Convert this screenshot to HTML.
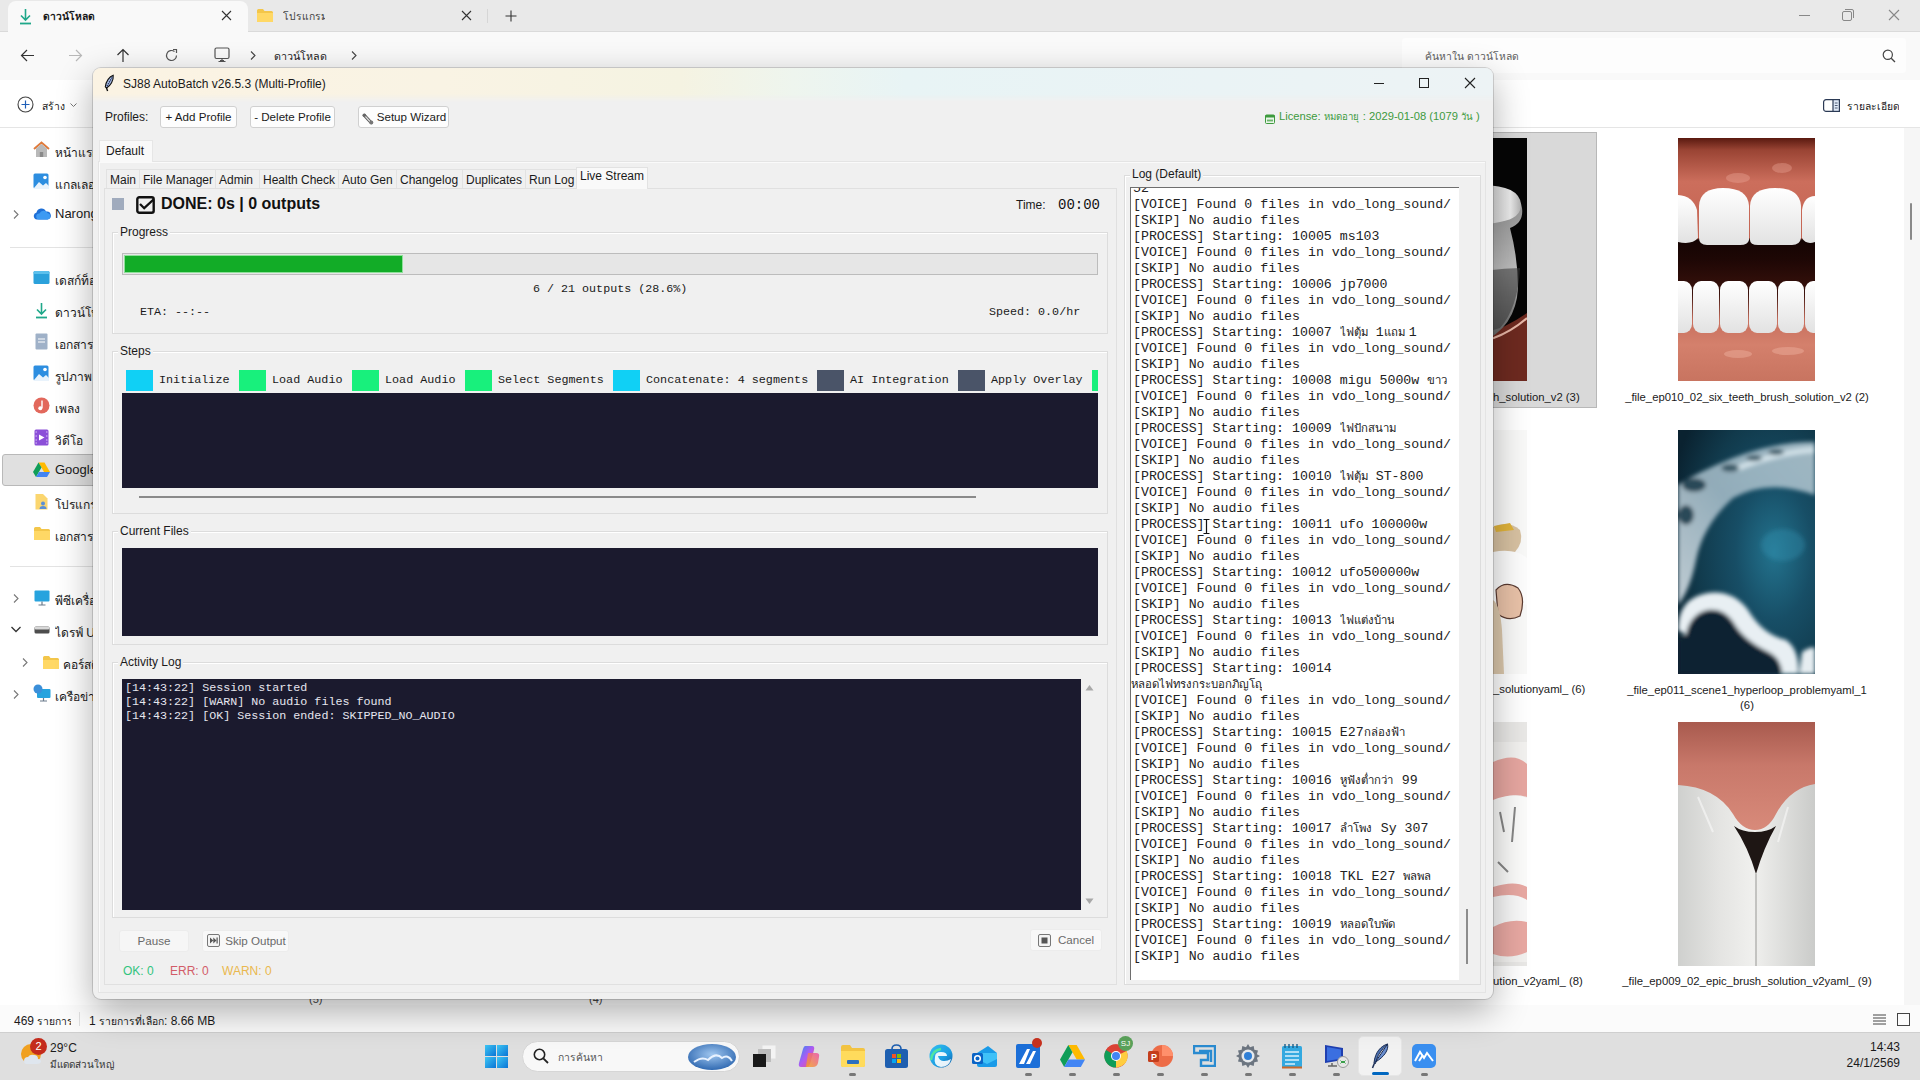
<!DOCTYPE html>
<html><head><meta charset="utf-8">
<style>
*{margin:0;padding:0;box-sizing:border-box}
html,body{width:1920px;height:1080px;overflow:hidden;font-family:"Liberation Sans",sans-serif;background:#fff;color:#1a1a1a}
.a{position:absolute}
.th{font-size:12px;white-space:nowrap}
.sb{position:absolute;left:55px;width:40px;overflow-x:clip;font-size:12px;color:#1a1a1a;white-space:nowrap}
.ic{position:absolute}
.lab{position:absolute;font-size:11.3px;color:#1a1a1a;white-space:nowrap;text-align:center}
.t{display:inline-block;overflow-x:clip;white-space:nowrap;vertical-align:baseline;font-size:0.86em}
.mono{font-family:"Liberation Mono",monospace}
/* app */
.win{position:absolute;left:93px;top:68px;width:1400px;height:931px;background:#f0f0f0;border-radius:8px;box-shadow:0 12px 36px rgba(0,0,0,.32),0 0 0 1px rgba(0,0,0,.14);overflow:hidden}
.btn{position:absolute;height:22px;background:#fdfdfd;border:1px solid #d0d0d0;border-radius:3px;font-size:11.6px;line-height:20px;padding:0;text-align:center;white-space:nowrap;color:#1a1a1a}
.tab{position:absolute;top:101px;height:19px;border:1px solid #e2e2e2;border-bottom:none;font-size:12px;line-height:20px;padding-left:3px;white-space:nowrap;color:#1a1a1a;background:#f0f0f0}
.lf{position:absolute;border:1px solid #dcdcdc;box-shadow:inset 1px 1px 0 #fff}
.lft{position:absolute;font-size:12px;background:#f0f0f0;padding:0 2px;color:#1a1a1a;white-space:nowrap}
.dark{position:absolute;background:#1b1a2e}
.step{position:absolute;top:302px;width:27px;height:21px}
.stt{position:absolute;top:303px;font-family:"Liberation Mono",monospace;font-size:11.75px;line-height:19px;color:#1a1a1a;white-space:nowrap}
.log{position:absolute;left:1134px;font-family:"Liberation Mono",monospace;font-size:13.25px;line-height:16px;color:#222;white-space:pre}
</style></head><body>

<!-- ============ EXPLORER BACKGROUND ============ -->
<div class="a" style="left:0;top:0;width:1920px;height:32px;background:#e9e9e9"></div>
<div class="a" style="left:8px;top:1px;width:240px;height:31px;background:#f9f9f9;border-radius:8px 8px 0 0"></div>
<div class="a" style="left:0;top:32px;width:1920px;height:48px;background:#f9f9f9"></div>
<div class="a" style="left:248px;top:31px;width:1672px;height:1px;background:#dadada"></div>
<div class="a" style="left:0;top:31px;width:8px;height:1px;background:#dadada"></div>
<div class="a" style="left:0;top:80px;width:1920px;height:47px;background:#ffffff"></div>
<div class="a" style="left:0;top:127px;width:1920px;height:1px;background:#e5e5e5"></div>
<div class="a" style="left:0;top:128px;width:1920px;height:877px;background:#ffffff"></div>
<div class="a" style="left:0;top:1005px;width:1920px;height:27px;background:#fbfbfb"></div>
<div class="a" style="left:0;top:1032px;width:1920px;height:48px;background:#dfdfdf;border-top:1px solid #cfcfcf"></div>


<!-- explorer tabs -->
<svg class="a" style="left:19px;top:8px" width="13" height="17" viewBox="0 0 13 17"><path d="M6.5 1V12M2 7.5L6.5 12L11 7.5" fill="none" stroke="#1fa88a" stroke-width="1.6"/><path d="M1 15.5H12" stroke="#1fa88a" stroke-width="1.8"/></svg>
<div class="a th" style="left:43px;top:8px;font-weight:bold;font-size:12px;color:#1a1a1a"><span class="t" style="width:53px">ดาวน์โหลด</span></div>
<svg class="a" style="left:221px;top:10px" width="11" height="11" viewBox="0 0 11 11"><path d="M1 1L10 10M10 1L1 10" stroke="#333" stroke-width="1.1"/></svg>
<svg class="a" style="left:256px;top:8px" width="18" height="15" viewBox="0 0 18 15"><path d="M1 2.5Q1 1 2.5 1H7L8.5 3H15.5Q17 3 17 4.5V13Q17 14 16 14H2Q1 14 1 13Z" fill="#f3c64a"/><path d="M1 5H17V13Q17 14 16 14H2Q1 14 1 13Z" fill="#ffd865"/></svg>
<div class="a th" style="left:283px;top:8px;color:#444"><span class="t" style="width:42px">โปรแกรม</span></div>
<svg class="a" style="left:461px;top:10px" width="11" height="11" viewBox="0 0 11 11"><path d="M1 1L10 10M10 1L1 10" stroke="#333" stroke-width="1.1"/></svg>
<div class="a" style="left:487px;top:9px;width:1px;height:14px;background:#d6d6d6"></div>
<svg class="a" style="left:505px;top:10px" width="12" height="12" viewBox="0 0 12 12"><path d="M6 0.5V11.5M0.5 6H11.5" stroke="#333" stroke-width="1.1"/></svg>
<div class="a" style="left:1799px;top:15px;width:11px;height:1px;background:#888"></div>
<svg class="a" style="left:1842px;top:9px" width="12" height="12" viewBox="0 0 12 12"><rect x="0.5" y="2.5" width="9" height="9" rx="1.5" fill="none" stroke="#888"/><path d="M3 0.5H10Q11.5 0.5 11.5 2V9" fill="none" stroke="#888"/></svg>
<svg class="a" style="left:1888px;top:9px" width="12" height="12" viewBox="0 0 12 12"><path d="M1 1L11 11M11 1L1 11" stroke="#888" stroke-width="1.1"/></svg>

<!-- nav row -->
<svg class="a" style="left:20px;top:49px" width="15" height="13" viewBox="0 0 15 13"><path d="M14 6.5H1.5M7 1L1.5 6.5L7 12" fill="none" stroke="#333" stroke-width="1.2"/></svg>
<svg class="a" style="left:68px;top:49px" width="15" height="13" viewBox="0 0 15 13"><path d="M1 6.5H13.5M8 1L13.5 6.5L8 12" fill="none" stroke="#b8b8b8" stroke-width="1.2"/></svg>
<svg class="a" style="left:116px;top:48px" width="14" height="15" viewBox="0 0 14 15"><path d="M7 14V1.5M1.5 7L7 1.5L12.5 7" fill="none" stroke="#333" stroke-width="1.2"/></svg>
<svg class="a" style="left:164px;top:48px" width="15" height="15" viewBox="0 0 15 15"><path d="M12.5 7.5A5 5 0 1 1 10.5 3.5" fill="none" stroke="#555" stroke-width="1.2"/><path d="M9 1.5H12.5V5" fill="none" stroke="#555" stroke-width="1.2"/></svg>
<svg class="a" style="left:214px;top:47px" width="16" height="16" viewBox="0 0 16 16"><rect x="1" y="1" width="14" height="10.5" rx="1.5" fill="none" stroke="#555" stroke-width="1.2"/><path d="M6 13.5H10M8 11.5V13.5M4.5 14.5H11.5" stroke="#555" stroke-width="1.2"/></svg>
<svg class="a" style="left:250px;top:51px" width="6" height="9" viewBox="0 0 6 9"><path d="M1 0.5L5 4.5L1 8.5" fill="none" stroke="#444" stroke-width="1.1"/></svg>
<div class="a th" style="left:274px;top:48px;font-size:12.5px;color:#1a1a1a"><span class="t" style="width:58px">ดาวน์โหลด</span></div>
<svg class="a" style="left:351px;top:51px" width="6" height="9" viewBox="0 0 6 9"><path d="M1 0.5L5 4.5L1 8.5" fill="none" stroke="#444" stroke-width="1.1"/></svg>
<div class="a" style="left:1402px;top:38px;width:504px;height:35px;background:#fdfdfd;border-radius:4px"></div>
<div class="a th" style="left:1425px;top:48px;color:#5e5e5e"><span class="t" style="width:108px">ค้นหาใน ดาวน์โหลด</span></div>
<svg class="a" style="left:1882px;top:49px" width="14" height="14" viewBox="0 0 14 14"><circle cx="5.8" cy="5.8" r="4.6" fill="none" stroke="#444" stroke-width="1.2"/><path d="M9.2 9.2L13 13" stroke="#444" stroke-width="1.3"/></svg>

<!-- command bar -->
<svg class="a" style="left:17px;top:96px" width="17" height="17" viewBox="0 0 17 17"><circle cx="8.5" cy="8.5" r="7.5" fill="none" stroke="#444" stroke-width="1.1"/><path d="M8.5 4.5V12.5M4.5 8.5H12.5" stroke="#1f5fb8" stroke-width="1.2"/></svg>
<div class="a th" style="left:42px;top:98px;color:#1a1a1a"><span class="t" style="width:23px">สร้าง</span></div>
<svg class="a" style="left:70px;top:103px" width="7" height="5" viewBox="0 0 7 5"><path d="M0.5 0.5L3.5 3.5L6.5 0.5" fill="none" stroke="#777"/></svg>
<svg class="a" style="left:1823px;top:99px" width="17" height="13" viewBox="0 0 17 13"><rect x="0.6" y="0.6" width="15.8" height="11.8" rx="2.5" fill="none" stroke="#2b3a55" stroke-width="1.2"/><rect x="10" y="0.6" width="6.4" height="11.8" fill="#dfe9f7" stroke="#2b3a55" stroke-width="1.2"/><path d="M11.8 4H14.6M11.8 6.5H14.6M11.8 9H14.6" stroke="#2b3a55" stroke-width="0.8"/></svg>
<div class="a th" style="left:1847px;top:98px;color:#1a1a1a"><span class="t" style="width:52px">รายละเอียด</span></div>

<!-- sidebar -->
<svg class="a" style="left:33px;top:141px" width="17" height="17" viewBox="0 0 17 17"><path d="M1 8L8.5 1.5L16 8" fill="none" stroke="#e07a3a" stroke-width="2"/><path d="M3 7.5V16H14V7.5L8.5 3Z" fill="#b9b9b9"/><rect x="6.8" y="11" width="3.4" height="5" fill="#8a8a8a"/></svg>
<div class="sb" style="top:143px">หน้าแรก</div>
<svg class="a" style="left:33px;top:173px" width="17" height="17" viewBox="0 0 17 17"><rect x="0.5" y="0.5" width="15" height="15" rx="1.5" fill="#2d8ee0"/><path d="M1 15L6 9L10 12.5L13 10L16 13V16H1Z" fill="#e9f3fc"/><circle cx="12" cy="4.5" r="1.8" fill="#fff"/></svg>
<div class="sb" style="top:175px">แกลเลอรี</div>
<svg class="a" style="left:13px;top:210px" width="6" height="9" viewBox="0 0 6 9"><path d="M1 0.5L5 4.5L1 8.5" fill="none" stroke="#777" stroke-width="1.1"/></svg>
<svg class="a" style="left:33px;top:207px" width="18" height="13" viewBox="0 0 18 13"><path d="M4 12.5A3.5 3.5 0 0 1 3.5 5.6A5 5 0 0 1 13 4.5A4 4 0 0 1 14.5 12.5Z" fill="#1e6fd6"/><path d="M6 12.5A3 3 0 0 1 6.5 6.5A4.5 4.5 0 0 1 14.5 6A3.3 3.3 0 0 1 14.5 12.5Z" fill="#3d9af3"/></svg>
<div class="sb" style="top:206px;font-size:13px">Narong</div>
<div class="a" style="left:10px;top:247px;width:83px;height:1px;background:#e3e3e3"></div>
<svg class="a" style="left:33px;top:270px" width="17" height="15" viewBox="0 0 17 15"><rect x="0.5" y="1" width="16" height="13" rx="1.5" fill="#2ba1db"/><rect x="0.5" y="1" width="16" height="3" rx="1.5" fill="#5cc0ec"/></svg>
<div class="sb" style="top:271px">เดสก์ท็อป</div>
<svg class="a" style="left:35px;top:302px" width="13" height="17" viewBox="0 0 13 17"><path d="M6.5 1V12M2 7.5L6.5 12L11 7.5" fill="none" stroke="#1fa88a" stroke-width="1.6"/><path d="M1 15.5H12" stroke="#1fa88a" stroke-width="1.8"/></svg>
<div class="sb" style="top:303px">ดาวน์โหลด</div>
<svg class="a" style="left:35px;top:333px" width="13" height="17" viewBox="0 0 13 17"><rect x="0.5" y="0.5" width="12" height="16" rx="1" fill="#9fb1c8"/><path d="M3 6H10M3 9H10" stroke="#fff" stroke-width="1"/></svg>
<div class="sb" style="top:335px">เอกสาร</div>
<svg class="a" style="left:33px;top:365px" width="17" height="17" viewBox="0 0 17 17"><rect x="0.5" y="0.5" width="15" height="15" rx="1.5" fill="#2d8ee0"/><path d="M1 15L6 9L10 12.5L13 10L16 13V16H1Z" fill="#e9f3fc"/><circle cx="12" cy="4.5" r="1.8" fill="#fff"/></svg>
<div class="sb" style="top:367px">รูปภาพ</div>
<svg class="a" style="left:33px;top:397px" width="17" height="17" viewBox="0 0 17 17"><circle cx="8.5" cy="8.5" r="8" fill="#e2685c"/><path d="M9 3.5V11" stroke="#fff" stroke-width="1.4"/><circle cx="7.3" cy="11.3" r="2" fill="#fff"/></svg>
<div class="sb" style="top:399px">เพลง</div>
<svg class="a" style="left:34px;top:429px" width="15" height="17" viewBox="0 0 15 17"><rect x="0.5" y="0.5" width="14" height="16" rx="1.5" fill="#8b4fd8"/><path d="M5 5.5L10.5 8.5L5 11.5Z" fill="#fff"/><path d="M1.5 3H3M1.5 7H3M1.5 11H3M1.5 14H3M12 3H13.5M12 7H13.5M12 11H13.5M12 14H13.5" stroke="#d7c3f5"/></svg>
<div class="sb" style="top:431px">วิดีโอ</div>
<div class="a" style="left:2px;top:454px;width:100px;height:32px;background:#e0e0e0;border:1px solid #b9b9b9;border-radius:3px"></div>
<svg class="a" style="left:33px;top:462px" width="17" height="15" viewBox="0 0 17 15"><path d="M5.5 0.5H11.5L17 10H11Z" fill="#ffba00"/><path d="M5.5 0.5L0 10L3 15L8.5 5.5Z" fill="#0f9d58"/><path d="M3 15H14L17 10H6Z" fill="#4285f4"/></svg>
<div class="sb" style="top:462px;font-size:13px">Google Drive</div>
<svg class="a" style="left:35px;top:493px" width="13" height="17" viewBox="0 0 13 17"><path d="M0.5 1H8L12.5 5.5V16.5H0.5Z" fill="#fbd66f"/><circle cx="8" cy="10.5" r="2" fill="#5b8fd6"/><path d="M4.5 16A3.5 3 0 0 1 11.5 16Z" fill="#5b8fd6"/></svg>
<div class="sb" style="top:495px">โปรแกรม</div>
<svg class="a" style="left:33px;top:526px" width="18" height="15" viewBox="0 0 18 15"><path d="M1 2.5Q1 1 2.5 1H7L8.5 3H15.5Q17 3 17 4.5V13Q17 14 16 14H2Q1 14 1 13Z" fill="#f3c64a"/><path d="M1 5H17V13Q17 14 16 14H2Q1 14 1 13Z" fill="#ffd865"/></svg>
<div class="sb" style="top:527px">เอกสาร</div>
<div class="a" style="left:10px;top:566px;width:83px;height:1px;background:#e3e3e3"></div>
<svg class="a" style="left:13px;top:594px" width="6" height="9" viewBox="0 0 6 9"><path d="M1 0.5L5 4.5L1 8.5" fill="none" stroke="#777" stroke-width="1.1"/></svg>
<svg class="a" style="left:34px;top:590px" width="16" height="16" viewBox="0 0 16 16"><rect x="0.5" y="0.5" width="15" height="11" rx="1" fill="#27a3de"/><path d="M8 11.5V14.5M4.5 15H11.5" stroke="#6b7b8b" stroke-width="1.2"/></svg>
<div class="sb" style="top:591px">พีซีเครื่องนี้</div>
<svg class="a" style="left:11px;top:626px" width="10" height="7" viewBox="0 0 10 7"><path d="M0.5 1L5 5.5L9.5 1" fill="none" stroke="#333" stroke-width="1.3"/></svg>
<svg class="a" style="left:34px;top:626px" width="16" height="8" viewBox="0 0 16 8"><rect x="0.5" y="0.5" width="15" height="7" rx="1.5" fill="#4d4d4d"/><rect x="0.5" y="0.5" width="15" height="3" rx="1.5" fill="#d8d8d8"/></svg>
<div class="sb" style="top:623px">ไดรฟ์ USB</div>
<svg class="a" style="left:22px;top:658px" width="6" height="9" viewBox="0 0 6 9"><path d="M1 0.5L5 4.5L1 8.5" fill="none" stroke="#777" stroke-width="1.1"/></svg>
<svg class="a" style="left:42px;top:655px" width="18" height="15" viewBox="0 0 18 15"><path d="M1 2.5Q1 1 2.5 1H7L8.5 3H15.5Q17 3 17 4.5V13Q17 14 16 14H2Q1 14 1 13Z" fill="#f3c64a"/><path d="M1 5H17V13Q17 14 16 14H2Q1 14 1 13Z" fill="#ffd865"/></svg>
<div class="sb" style="top:655px;left:63px">คอร์สติดตั้ง</div>
<svg class="a" style="left:13px;top:690px" width="6" height="9" viewBox="0 0 6 9"><path d="M1 0.5L5 4.5L1 8.5" fill="none" stroke="#777" stroke-width="1.1"/></svg>
<svg class="a" style="left:33px;top:684px" width="18" height="18" viewBox="0 0 18 18"><rect x="4" y="5" width="13.5" height="9" rx="1" fill="#27a3de"/><circle cx="5" cy="5" r="4.5" fill="#3b8fd9"/><path d="M10.5 14V16.5M7 17H14" stroke="#6b7b8b" stroke-width="1.2"/></svg>
<div class="sb" style="top:687px">เครือข่าย</div>


<!-- content thumbnails -->
<div class="a" style="left:1904px;top:128px;width:16px;height:877px;background:#f6f6f6"></div>
<div class="a" style="left:1910px;top:203px;width:2px;height:37px;background:#8a8a8a;border-radius:1px"></div>
<div class="a" style="left:1380px;top:132px;width:217px;height:276px;background:#d9d9d9;border:1px solid #b8b8b8"></div>
<svg class="a" style="left:1390px;top:138px" width="137" height="243" viewBox="0 0 137 243">
<defs><linearGradient id="g1" x1="0" y1="0" x2="1" y2="0"><stop offset="0.6" stop-color="#d8d8d8"/><stop offset="0.85" stop-color="#eeeeee"/><stop offset="1" stop-color="#b0b0b0"/></linearGradient>
<linearGradient id="g1b" x1="0" y1="0" x2="0" y2="1"><stop offset="0" stop-color="#8a8a8a"/><stop offset="0.5" stop-color="#bdbdbd"/><stop offset="1" stop-color="#5a5a5a"/></linearGradient></defs>
<rect width="137" height="243" fill="#060606"/>
<path d="M0 200Q80 215 137 175V243H0Z" fill="#6e2a20"/>
<path d="M60 55Q130 45 132 70Q134 85 120 90Q128 120 128 150Q126 190 90 205Q60 210 40 200V60Z" fill="url(#g1b)"/>
<path d="M60 50Q128 40 131 66Q132 80 110 84Q80 90 60 85Z" fill="url(#g1)"/>
<path d="M60 140Q100 130 130 130Q128 170 110 190Q80 200 60 195Z" fill="#3a3a3a" opacity="0.55"/>
<path d="M50 205Q100 212 137 180" fill="none" stroke="#e8b8a8" stroke-width="2.2"/>
</svg>
<div class="lab" style="left:1493px;top:391px;width:100px;text-align:left">h_solution_v2 (3)</div>

<svg class="a" style="left:1678px;top:138px" width="137" height="243" viewBox="0 0 137 243">
<defs><linearGradient id="gm" x1="0" y1="0" x2="0" y2="1"><stop offset="0" stop-color="#5a1a10"/><stop offset="0.05" stop-color="#9a4434"/><stop offset="0.18" stop-color="#cc6e5c"/><stop offset="0.41" stop-color="#c46452"/><stop offset="0.42" stop-color="#140403"/><stop offset="0.5" stop-color="#1e0705"/><stop offset="0.64" stop-color="#3a120c"/><stop offset="0.75" stop-color="#c8705e"/><stop offset="0.85" stop-color="#d4806c"/><stop offset="1" stop-color="#c87460"/></linearGradient>
<linearGradient id="tw" x1="0" y1="0" x2="0" y2="1"><stop offset="0" stop-color="#ffffff"/><stop offset="1" stop-color="#e2e2e2"/></linearGradient></defs>
<rect width="137" height="243" fill="url(#gm)"/>
<ellipse cx="60" cy="40" rx="12" ry="5" fill="#f0b0a0" opacity="0.35"/><ellipse cx="104" cy="30" rx="10" ry="5" fill="#f0b0a0" opacity="0.35"/>
<path d="M0 57Q15 58 19 72L20 100Q14 107 0 104Z" fill="url(#tw)"/>
<path d="M137 58Q126 58 124 72L124 100Q128 107 137 104Z" fill="url(#tw)"/>
<path d="M21 68Q22 50 45 50Q70 50 71 68L71 102Q70 107 62 107H29Q21 107 21 100Z" fill="url(#tw)"/>
<path d="M72 68Q73 50 97 50Q122 50 123 68L123 100Q122 107 114 107H80Q72 107 72 102Z" fill="url(#tw)"/>
<rect x="-8" y="143" width="22" height="52" rx="8" ry="9" fill="url(#tw)"/><rect x="15" y="143" width="26" height="52" rx="8" ry="9" fill="url(#tw)"/><rect x="42" y="143" width="28" height="52" rx="8" ry="9" fill="url(#tw)"/><rect x="71" y="143" width="28" height="52" rx="8" ry="9" fill="url(#tw)"/><rect x="100" y="143" width="26" height="52" rx="8" ry="9" fill="url(#tw)"/><rect x="127" y="143" width="23" height="52" rx="8" ry="9" fill="url(#tw)"/>
<ellipse cx="60" cy="216" rx="14" ry="4" fill="#f2b8a8" opacity="0.4"/><ellipse cx="110" cy="213" rx="16" ry="4" fill="#f2b8a8" opacity="0.4"/>
</svg>
<div class="lab" style="left:1620px;top:391px;width:254px">_file_ep010_02_six_teeth_brush_solution_v2 (2)</div>

<svg class="a" style="left:1390px;top:430px" width="137" height="244" viewBox="0 0 137 244">
<rect width="137" height="244" fill="#f9f9f8"/>
<path d="M103 97Q118 90 130 100Q134 112 125 122L103 122Z" fill="#d8c2a2"/>
<path d="M104 96L120 93L124 100L106 102Z" fill="#e2b43a"/>
<path d="M103 122Q125 118 137 128V175Q122 170 103 172Z" fill="#fdfdfd"/>
<path d="M106 160Q115 150 128 158Q136 168 130 186Q118 192 108 184Z" fill="#e9c2a8" stroke="#5a3a30" stroke-width="1.2"/>
<path d="M103 170Q110 175 112 200L114 244H103Z" fill="#dcc8ac"/>
</svg>
<div class="lab" style="left:1493px;top:683px;width:100px;text-align:left">_solutionyaml_ (6)</div>

<svg class="a" style="left:1678px;top:430px" width="137" height="244" viewBox="0 0 137 244">
<defs><radialGradient id="gb" cx="0.7" cy="0.5" r="0.8"><stop offset="0" stop-color="#23738e"/><stop offset="0.35" stop-color="#174e66"/><stop offset="0.7" stop-color="#113a4c"/><stop offset="1" stop-color="#0a2230"/></radialGradient>
<linearGradient id="gw" x1="1" y1="0" x2="0" y2="1"><stop offset="0" stop-color="#b8ccd6"/><stop offset="0.5" stop-color="#a8bfcb"/><stop offset="1" stop-color="#dfe8ee"/></linearGradient>
<filter id="bl" x="-10%" y="-10%" width="120%" height="120%"><feGaussianBlur stdDeviation="2"/></filter>
<clipPath id="cb"><rect width="137" height="244"/></clipPath></defs>
<rect width="137" height="244" fill="url(#gb)"/>
<g clip-path="url(#cb)" filter="url(#bl)">
<ellipse cx="105" cy="115" rx="22" ry="16" fill="#3aa0c0" opacity="0.3"/>
<path d="M137 12Q95 12 55 28Q20 42 0 55V175Q12 160 18 130Q25 95 55 68Q90 48 137 65Z" fill="url(#gw)" opacity="0.85"/>
<path d="M137 20Q100 22 60 38" stroke="#cfdfe6" stroke-width="6" fill="none"/>
<ellipse cx="98" cy="22" rx="8" ry="3" fill="#3a5a68"/><ellipse cx="76" cy="28" rx="8" ry="3" fill="#3a5a68"/><ellipse cx="52" cy="38" rx="9" ry="4" fill="#3a5a68"/>
<ellipse cx="16" cy="55" rx="12" ry="7" fill="#2a4a58"/><ellipse cx="8" cy="85" rx="8" ry="10" fill="#2a4a58"/>
<path d="M0 200Q0 168 30 163Q55 160 70 180Q85 205 108 210Q122 220 120 244H104Q103 228 90 222Q65 210 55 192Q45 178 30 180Q12 184 8 205Z" fill="#e8eff3"/>
<path d="M8 205Q12 184 30 180Q45 178 55 192Q65 210 90 222Q103 228 104 244H0V210Z" fill="#0e2430"/>
<path d="M124 222Q133 216 137 218V244H121Z" fill="#e6edf1"/>
</g>
</svg>
<div class="lab" style="left:1620px;top:683px;width:254px;line-height:15px">_file_ep011_scene1_hyperloop_problemyaml_1<br>(6)</div>

<svg class="a" style="left:1390px;top:722px" width="137" height="244" viewBox="0 0 137 244">
<rect width="137" height="244" fill="#e9e8e6"/>
<path d="M103 20H137V240H103Z" fill="#f2f1ef"/>
<path d="M103 40Q125 30 137 42V75Q120 70 103 80Z" fill="#e6a6a0"/>
<path d="M103 78Q122 70 137 76V165Q120 160 103 168Z" fill="#fbfbfa"/>
<path d="M110 90L114 110M125 85L122 120M108 140L118 150" stroke="#3a3a3a" stroke-width="2" opacity="0.6"/>
<path d="M103 165Q125 158 137 165V230Q120 238 103 232Z" fill="#e8a8a2"/>
<path d="M103 175Q125 170 137 178V200Q120 196 103 205Z" fill="#f8f8f8"/>
</svg>
<div class="lab" style="left:1493px;top:975px;width:100px;text-align:left">ution_v2yaml_ (8)</div>

<svg class="a" style="left:1678px;top:722px" width="137" height="244" viewBox="0 0 137 244">
<defs><linearGradient id="gp" x1="0" y1="0" x2="0" y2="1"><stop offset="0" stop-color="#a85a4e"/><stop offset="0.4" stop-color="#c8786a"/><stop offset="1" stop-color="#d88a7a"/></linearGradient>
<linearGradient id="gt" x1="0" y1="0" x2="1" y2="0"><stop offset="0" stop-color="#cfd0ce"/><stop offset="0.3" stop-color="#e4e4e2"/><stop offset="0.55" stop-color="#f0f0ee"/><stop offset="1" stop-color="#cacbc9"/></linearGradient></defs>
<rect width="137" height="244" fill="url(#gt)"/>
<path d="M0 0H137V62Q112 66 98 92Q90 108 77 108Q64 108 55 92Q38 65 0 63Z" fill="url(#gp)"/>
<path d="M56 104Q64 110 77 110Q90 110 98 104Q86 125 78 152Q70 125 56 104Z" fill="#1e1614"/>
<path d="M78 152V244" stroke="#b4b4b2" stroke-width="1.5"/>
<path d="M20 75L35 110M110 85L100 120" stroke="#fff" stroke-width="2" opacity="0.5"/>
</svg>
<div class="lab" style="left:1620px;top:975px;width:254px">_file_ep009_02_epic_brush_solution_v2yaml_ (9)</div>

<!-- status bar -->
<div class="a th" style="left:14px;top:1013px;color:#1a1a1a">469 <span class="t" style="width:34px">รายการ</span></div>
<div class="a" style="left:79px;top:1012px;width:1px;height:14px;background:#e0e0e0"></div>
<div class="a th" style="left:89px;top:1013px;color:#1a1a1a">1 <span class="t" style="width:65px">รายการที่เลือก</span>: 8.66 MB</div>
<div class="a" style="left:309px;top:993px;font-size:11px;color:#444">(5)</div>
<div class="a" style="left:589px;top:993px;font-size:11px;color:#444">(4)</div>
<svg class="a" style="left:1873px;top:1014px" width="13" height="11" viewBox="0 0 13 11"><path d="M0 1H13M0 4H13M0 7H13M0 10H13" stroke="#444" stroke-width="1"/></svg>
<svg class="a" style="left:1897px;top:1013px" width="13" height="13" viewBox="0 0 13 13"><rect x="0.5" y="0.5" width="12" height="12" fill="none" stroke="#444"/></svg>


<!-- taskbar -->
<svg class="a" style="left:20px;top:1038px" width="26" height="28" viewBox="0 0 26 28"><circle cx="11" cy="16" r="10" fill="#f0a020"/><path d="M4 23Q4 19 8 19Q10 16 14 17Q18 17 18 21Q21 21 21 24Q20 26 17 26H7Q4 26 4 23Z" fill="#dfe6ee"/></svg>
<div class="a" style="left:30px;top:1038px;width:17px;height:17px;border-radius:50%;background:#c42b1c;color:#fff;font-size:11px;line-height:17px;text-align:center">2</div>
<div class="a th" style="left:50px;top:1041px;color:#1a1a1a;font-size:12px">29°C</div>
<div class="a th" style="left:50px;top:1057px;color:#333;font-size:11.5px"><span class="t" style="width:66px">มีแดดส่วนใหญ่</span></div>

<svg class="a" style="left:485px;top:1045px" width="23" height="23" viewBox="0 0 23 23"><defs><linearGradient id="wl" x1="0" y1="0" x2="1" y2="1"><stop offset="0" stop-color="#3ec7f4"/><stop offset="1" stop-color="#0a74d6"/></linearGradient></defs><rect x="0" y="0" width="11" height="11" fill="url(#wl)"/><rect x="12" y="0" width="11" height="11" fill="url(#wl)"/><rect x="0" y="12" width="11" height="11" fill="url(#wl)"/><rect x="12" y="12" width="11" height="11" fill="url(#wl)"/></svg>
<div class="a" style="left:522px;top:1041px;width:218px;height:31px;border-radius:16px;background:#f8f8f8;border:1px solid #d6d6d6"></div>
<svg class="a" style="left:533px;top:1048px" width="16" height="16" viewBox="0 0 16 16"><circle cx="6.5" cy="6.5" r="5.2" fill="none" stroke="#222" stroke-width="1.6"/><path d="M10.3 10.3L15 15" stroke="#222" stroke-width="1.8"/></svg>
<div class="a th" style="left:558px;top:1049px;color:#555;font-size:12px"><span class="t" style="width:52px">การค้นหา</span></div>
<svg class="a" style="left:688px;top:1044px" width="48" height="26" viewBox="0 0 48 26"><defs><radialGradient id="sg" cx="0.5" cy="0.4" r="0.7"><stop offset="0" stop-color="#9fc6ef"/><stop offset="1" stop-color="#1f5ba8"/></radialGradient></defs><ellipse cx="24" cy="13" rx="24" ry="13" fill="url(#sg)"/><path d="M6 18Q14 12 20 16Q28 8 34 14Q40 10 44 17" fill="none" stroke="#e8f2ff" stroke-width="2"/></svg>

<svg class="a" style="left:753px;top:1045px" width="24" height="23" viewBox="0 0 24 23"><rect x="9" y="0" width="14" height="14" fill="#f4f4f4" stroke="#e0e0e0"/><rect x="5" y="4" width="13" height="13" fill="#bdbdbd"/><rect x="0" y="9" width="13" height="13" fill="#1a1a1a"/></svg>
<svg class="a" style="left:797px;top:1045px" width="24" height="23" viewBox="0 0 24 23"><defs><linearGradient id="cp1" x1="0" y1="0" x2="1" y2="1"><stop offset="0" stop-color="#2f8df5"/><stop offset="0.5" stop-color="#b05af2"/><stop offset="1" stop-color="#f55a6b"/></linearGradient><linearGradient id="cp2" x1="0" y1="1" x2="1" y2="0"><stop offset="0" stop-color="#f5a623"/><stop offset="1" stop-color="#ec4fa7"/></linearGradient></defs><path d="M8 1H15Q18 1 17 5L13 19Q12 22 9 22H4Q1 22 2 18L6 4Q7 1 8 1Z" fill="url(#cp1)"/><path d="M11 8H19Q23 8 22 12L21 18Q20 22 16 22H9Z" fill="url(#cp2)" opacity="0.85"/></svg>
<svg class="a" style="left:841px;top:1045px" width="24" height="22" viewBox="0 0 24 22"><path d="M0 2Q0 0 2 0H9L11 3H22Q24 3 24 5V20Q24 22 22 22H2Q0 22 0 20Z" fill="#f3c443"/><path d="M0 6H24V20Q24 22 22 22H2Q0 22 0 20Z" fill="#ffdb5c"/><rect x="6" y="15" width="12" height="4" rx="1" fill="#2c6fbe"/></svg>
<div class="a" style="left:849px;top:1073px;width:7px;height:3px;border-radius:2px;background:#777"></div>
<svg class="a" style="left:885px;top:1044px" width="23" height="24" viewBox="0 0 23 24"><path d="M7 5Q7 1 11.5 1Q16 1 16 5" fill="none" stroke="#1e5fb0" stroke-width="1.6"/><rect x="0" y="5" width="23" height="19" rx="2.5" fill="#1e5fb0"/><rect x="7" y="10" width="4" height="4" fill="#f35325"/><rect x="12" y="10" width="4" height="4" fill="#81bc06"/><rect x="7" y="15" width="4" height="4" fill="#05a6f0"/><rect x="12" y="15" width="4" height="4" fill="#ffba08"/></svg>
<svg class="a" style="left:929px;top:1044px" width="24" height="24" viewBox="0 0 24 24"><defs><linearGradient id="ed" x1="0" y1="0" x2="1" y2="1"><stop offset="0" stop-color="#35c1f1"/><stop offset="0.6" stop-color="#1b9de2"/><stop offset="1" stop-color="#0c59a4"/></linearGradient></defs><circle cx="12" cy="12" r="11.5" fill="url(#ed)"/><path d="M6 13Q6 8 12 8Q18 8 18 12H9Q10 17 15 17Q19 17 22 15Q20 23 12 23Q4 22 6 13Z" fill="#fff" opacity="0.9"/><path d="M2 16Q3 6 12 5" fill="none" stroke="#50e6a0" stroke-width="2.5"/></svg>
<svg class="a" style="left:972px;top:1045px" width="25" height="22" viewBox="0 0 25 22"><path d="M5 8L16 1L25 8V20Q25 22 23 22H7Q5 22 5 20Z" fill="#1a9be8"/><path d="M5 8L25 8L25 14L15 19L5 14Z" fill="#3fc1f8"/><rect x="0" y="8" width="11" height="11" rx="1.5" fill="#0a64c6"/><circle cx="5.5" cy="13.5" r="2.8" fill="none" stroke="#fff" stroke-width="1.5"/></svg>
<svg class="a" style="left:1016px;top:1044px" width="24" height="24" viewBox="0 0 24 24"><rect x="0" y="0" width="24" height="24" rx="2" fill="#1c6fd8"/><path d="M3 20L11 5H14L8 20ZM10 20L17 7H20L14 20Z" fill="#fff"/></svg>
<div class="a" style="left:1032px;top:1038px;width:10px;height:10px;border-radius:50%;background:#c8311e"></div>
<div class="a" style="left:1025px;top:1073px;width:7px;height:3px;border-radius:2px;background:#777"></div>
<svg class="a" style="left:1060px;top:1045px" width="25" height="22" viewBox="0 0 25 22"><path d="M8.3 0H16.7L25 14.5H16.7Z" fill="#ffba00"/><path d="M8.3 0L0 14.5L4.2 22L12.5 7.3Z" fill="#0f9d58"/><path d="M4.2 22H20.8L25 14.5H8.4Z" fill="#4285f4"/></svg>
<div class="a" style="left:1069px;top:1073px;width:7px;height:3px;border-radius:2px;background:#777"></div>
<svg class="a" style="left:1104px;top:1044px" width="24" height="24" viewBox="0 0 24 24"><circle cx="12" cy="12" r="11.5" fill="#db4437"/><path d="M12 12L22.5 7A11.5 11.5 0 0 0 2 6Z" fill="#db4437"/><path d="M12 12L2 6A11.5 11.5 0 0 0 12 23.5Z" fill="#0f9d58"/><path d="M12 12L12 23.5A11.5 11.5 0 0 0 22.5 7Z" fill="#ffcd40"/><circle cx="12" cy="12" r="5" fill="#fff"/><circle cx="12" cy="12" r="4" fill="#4285f4"/></svg>
<div class="a" style="left:1118px;top:1036px;width:15px;height:15px;border-radius:50%;background:#5aa25a;color:#fff;font-size:8px;line-height:15px;text-align:center">SJ</div>
<div class="a" style="left:1113px;top:1073px;width:7px;height:3px;border-radius:2px;background:#777"></div>
<svg class="a" style="left:1148px;top:1044px" width="25" height="24" viewBox="0 0 25 24"><circle cx="14" cy="12" r="11" fill="#ed6c47"/><path d="M14 1A11 11 0 0 1 25 12H14Z" fill="#ff8f6b"/><rect x="0" y="7" width="11" height="11" rx="1.5" fill="#c43e1c"/><text x="3" y="16" font-size="9" fill="#fff" font-family="Liberation Sans" font-weight="bold">P</text></svg>
<div class="a" style="left:1157px;top:1073px;width:7px;height:3px;border-radius:2px;background:#777"></div>
<svg class="a" style="left:1193px;top:1045px" width="23" height="22" viewBox="0 0 23 22"><path d="M1 1H22V21H8V15H15V8H1Z" fill="none" stroke="#2a8bd0" stroke-width="2.4"/><path d="M6 6H18V17" fill="none" stroke="#2a8bd0" stroke-width="2.4"/></svg>
<div class="a" style="left:1201px;top:1073px;width:7px;height:3px;border-radius:2px;background:#777"></div>
<svg class="a" style="left:1236px;top:1044px" width="24" height="24" viewBox="0 0 24 24"><path d="M12 0L14 3.2L17.7 2.1L18.3 5.8L22 6.6L20.9 10.2L24 12L20.9 13.8L22 17.4L18.3 18.2L17.7 21.9L14 20.8L12 24L10 20.8L6.3 21.9L5.7 18.2L2 17.4L3.1 13.8L0 12L3.1 10.2L2 6.6L5.7 5.8L6.3 2.1L10 3.2Z" fill="#6c7580"/><circle cx="12" cy="12" r="6.5" fill="#e6e9ec"/><circle cx="12" cy="12" r="4" fill="#2f7fd6"/></svg>
<div class="a" style="left:1245px;top:1073px;width:7px;height:3px;border-radius:2px;background:#777"></div>
<svg class="a" style="left:1281px;top:1043px" width="22" height="26" viewBox="0 0 22 26"><rect x="1" y="3" width="20" height="22" rx="1.5" fill="#33a9e0"/><path d="M4 9H18M4 13H18M4 17H18M4 21H14" stroke="#d8f0fb" stroke-width="1.4"/><path d="M4 1V5M8 1V5M12 1V5M16 1V5" stroke="#1b5f8a" stroke-width="1.4"/><rect x="1" y="23.5" width="20" height="2" fill="#c8692b"/></svg>
<div class="a" style="left:1289px;top:1073px;width:7px;height:3px;border-radius:2px;background:#777"></div>
<svg class="a" style="left:1325px;top:1044px" width="24" height="24" viewBox="0 0 24 24"><path d="M0 1L18 4V16L0 19Z" fill="#1f3fb0"/><path d="M2 3L16 5.5V14.5L2 17Z" fill="#3b6fe0"/><path d="M7 19V22M3 22H12" stroke="#666" stroke-width="1.5"/><circle cx="18" cy="18" r="5.5" fill="#e6e6e6" stroke="#9a9a9a"/><path d="M15.5 19.5L18 17L20.5 19.5M15.5 16.5L18 19L20.5 16.5" fill="none" stroke="#3aa04a" stroke-width="1"/></svg>
<div class="a" style="left:1333px;top:1073px;width:7px;height:3px;border-radius:2px;background:#777"></div>
<div class="a" style="left:1358px;top:1036px;width:44px;height:40px;border-radius:5px;background:#f2f2f2;border:1px solid #e6e6e6"></div>
<svg class="a" style="left:1371px;top:1043px" width="18" height="26" viewBox="0 0 18 26"><path d="M16.5 1C10 3 4 9 3 20L4.5 20.5C6 13 10 7 16.5 1Z" fill="#4a6fb0" stroke="#1c2e55" stroke-width="1"/><path d="M16.5 1C18 7 13 14 4.5 19Z" fill="#6a8fd0" stroke="#1c2e55" stroke-width="1"/><path d="M3.5 20L1.5 25" stroke="#1c2e55" stroke-width="1.5"/></svg>
<div class="a" style="left:1372px;top:1072px;width:17px;height:3px;border-radius:2px;background:#0067c0"></div>
<svg class="a" style="left:1412px;top:1044px" width="24" height="24" viewBox="0 0 24 24"><rect x="0" y="0" width="24" height="24" rx="5" fill="#3a8ff0"/><path d="M3 17L8 8L12 14L15 9L21 17" fill="none" stroke="#fff" stroke-width="2"/><path d="M7 17L11 11" stroke="#fff" stroke-width="2"/></svg>
<div class="a" style="left:1421px;top:1073px;width:7px;height:3px;border-radius:2px;background:#777"></div>
<div class="a th" style="left:1820px;top:1040px;width:80px;text-align:right;color:#1a1a1a">14:43</div>
<div class="a th" style="left:1820px;top:1056px;width:80px;text-align:right;color:#1a1a1a">24/1/2569</div>

<!-- APP WINDOW -->
<div class="win" id="win">
<!-- title bar -->
<div class="a" style="left:0;top:0;width:1400px;height:34px;background:linear-gradient(90deg,#fbf3e3 0%,#f9f3e4 25%,#f5f3e2 42%,#eef5ee 50%,#e8f4f5 58%,#eaf3f5 80%,#edf3f5 100%);-webkit-mask-image:linear-gradient(#000 0,#000 26px,transparent 34px)"></div>
<svg class="a" style="left:11px;top:6px" width="11" height="18" viewBox="0 0 11 18"><path d="M9.2 1.2C5.5 2.5 2 7 1.3 12.8L2.6 14C6.5 11.5 9.8 6.5 9.2 1.2Z" fill="#a4b8e2" stroke="#111" stroke-width="1.1"/><path d="M8 3.5L2.8 12.5" stroke="#1a2a55" stroke-width="1.2" stroke-dasharray="1.2 1"/><path d="M2.2 13.2L3.6 17" stroke="#111" stroke-width="1.4"/></svg>
<div class="a th" id="ttl" style="left:30px;top:9px;font-size:12px;color:#1a1a1a">SJ88 AutoBatch v26.5.3 (Multi-Profile)</div>
<div class="a" style="left:1281px;top:15px;width:10px;height:1px;background:#222"></div>
<div class="a" style="left:1326px;top:10px;width:10px;height:10px;border:1px solid #222"></div>
<svg class="a" style="left:1371px;top:9px" width="12" height="12" viewBox="0 0 12 12"><path d="M1 1L11 11M11 1L1 11" stroke="#222" stroke-width="1.1"/></svg>

<!-- profiles row -->
<div class="a th" style="left:12px;top:42px">Profiles:</div>
<div class="btn" style="left:67px;top:38px;width:77px">+ Add Profile</div>
<div class="btn" style="left:157px;top:38px;width:85px">- Delete Profile</div>
<div class="btn" style="left:265px;top:38px;width:91px;padding-left:16px">Setup Wizard</div>
<svg class="a" style="left:269px;top:45px" width="12" height="12" viewBox="0 0 12 12"><path d="M2.5 2.5L9 9.5" stroke="#555" stroke-width="3.2" stroke-linecap="round"/><path d="M2.5 2.5L9 9.5" stroke="#ddd" stroke-width="1.2"/><circle cx="2.3" cy="2.3" r="1.8" fill="#666"/><circle cx="9.3" cy="9.6" r="2" fill="#777"/></svg>
<svg class="a" style="left:1172px;top:46px" width="10" height="10" viewBox="0 0 10 10"><rect x="0.5" y="1" width="9" height="8.5" rx="1" fill="#e8f5e8" stroke="#3d9a3d"/><rect x="0.5" y="1" width="9" height="2.5" fill="#3d9a3d"/><path d="M3 5v3M5 5v3M7 5v3M2 6.5h6" stroke="#3d9a3d" stroke-width="0.6"/></svg>
<div class="a th" id="lic" style="left:1186px;top:41px;font-size:11.2px;color:#3d9a3d">License: <span class="t" style="width:39px">หมดอายุ</span>: 2029-01-08 (1079 <span class="t" style="width:15px">วัน</span>)</div>

<!-- outer notebook -->
<div class="a" style="left:5px;top:93px;width:1388px;height:832px;border:1px solid #e4e4e4;box-shadow:inset 1px 1px 0 #fafafa"></div>
<div class="a" style="left:6px;top:72px;width:54px;height:22px;background:#f9f9f9;border:1px solid #e6e6e6;border-bottom:none"></div>
<div class="a th" style="left:13px;top:76px">Default</div>

<!-- inner notebook -->
<div class="a" style="left:11px;top:120px;width:1013px;height:797px;border:1px solid #e0e0e0"></div>
<div class="tab" style="left:13px;width:34px">Main</div>
<div class="tab" style="left:46px;width:77px">File Manager</div>
<div class="tab" style="left:122px;width:45px">Admin</div>
<div class="tab" style="left:166px;width:80px">Health Check</div>
<div class="tab" style="left:245px;width:59px">Auto Gen</div>
<div class="tab" style="left:303px;width:67px">Changelog</div>
<div class="tab" style="left:369px;width:64px">Duplicates</div>
<div class="tab" style="left:432px;width:52px">Run Log</div>
<div class="tab" style="left:483px;width:72px;top:99px;height:22px;background:#f9f9f9;line-height:17px">Live Stream</div>

<!-- status line -->
<div class="a" style="left:19px;top:130px;width:12px;height:12px;background:#a0abbd"></div>
<svg class="a" style="left:43px;top:128px" width="19" height="18" viewBox="0 0 19 18"><rect x="1.3" y="1.3" width="16.4" height="15.4" rx="2" fill="none" stroke="#111" stroke-width="2.4"/><path d="M4 8 L8.2 12.2 L17.5 3.5" fill="none" stroke="#111" stroke-width="2.3"/></svg>
<div class="a" id="done" style="left:68px;top:127px;font-size:16px;font-weight:bold;color:#111;white-space:nowrap">DONE: 0s | 0 outputs</div>
<div class="a th" style="left:923px;top:130px">Time:</div>
<div class="a mono" style="left:965px;top:129px;font-size:14px;color:#111">00:00</div>

<!-- Progress -->
<div class="lf" style="left:19px;top:164px;width:996px;height:102px"></div>
<div class="lft" style="left:25px;top:157px">Progress</div>
<div class="a" style="left:29px;top:185px;width:976px;height:22px;background:#e6e6e6;border:1px solid #bcbcbc"></div>
<div class="a" style="left:32px;top:188px;width:277px;height:16px;background:#12ac27;outline:1px solid #8fe09a"></div>
<div class="a mono" style="left:440px;top:214px;font-size:11.7px;color:#1a1a1a">6 / 21 outputs (28.6%)</div>
<div class="a mono" style="left:47px;top:237px;font-size:11.7px;color:#1a1a1a">ETA: --:--</div>
<div class="a mono" style="left:896px;top:237px;font-size:11.7px;color:#1a1a1a">Speed: 0.0/hr</div>

<!-- Steps -->
<div class="lf" style="left:19px;top:283px;width:996px;height:163px"></div>
<div class="lft" style="left:25px;top:276px">Steps</div>
<div class="step" style="left:33px;background:#10d0f5"></div><div class="stt" style="left:66px">Initialize</div>
<div class="step" style="left:146px;background:#18f07c"></div><div class="stt" style="left:179px">Load Audio</div>
<div class="step" style="left:259px;background:#18f07c"></div><div class="stt" style="left:292px">Load Audio</div>
<div class="step" style="left:372px;background:#18f07c"></div><div class="stt" style="left:405px">Select Segments</div>
<div class="step" style="left:520px;background:#10d0f5"></div><div class="stt" style="left:553px">Concatenate: 4 segments</div>
<div class="step" style="left:724px;background:#4a5468"></div><div class="stt" style="left:757px">AI Integration</div>
<div class="step" style="left:865px;background:#4a5468"></div><div class="stt" style="left:898px">Apply Overlay</div>
<div class="step" style="left:999px;width:6px;background:#18f07c"></div>
<div class="dark" style="left:29px;top:325px;width:976px;height:95px"></div>
<div class="a" style="left:46px;top:428px;width:837px;height:2px;background:#8a8a8a"></div>

<!-- Current files -->
<div class="lf" style="left:19px;top:463px;width:996px;height:114px"></div>
<div class="lft" style="left:25px;top:456px">Current Files</div>
<div class="dark" style="left:29px;top:480px;width:976px;height:88px"></div>

<!-- Activity log -->
<div class="lf" style="left:19px;top:594px;width:996px;height:256px"></div>
<div class="lft" style="left:25px;top:587px">Activity Log</div>
<div class="dark" style="left:29px;top:611px;width:959px;height:231px"></div>
<div class="a mono" style="left:32px;top:613px;font-size:11.7px;line-height:14px;color:#e6e6ee;white-space:pre">[14:43:22] Session started
[14:43:22] [WARN] No audio files found
[14:43:22] [OK] Session ended: SKIPPED_NO_AUDIO</div>
<svg class="a" style="left:992px;top:616px" width="9" height="7" viewBox="0 0 9 7"><path d="M0.5 6.5L4.5 1L8.5 6.5Z" fill="#a8a8a8"/></svg>
<svg class="a" style="left:992px;top:830px" width="9" height="7" viewBox="0 0 9 7"><path d="M0.5 0.5L4.5 6L8.5 0.5Z" fill="#a8a8a8"/></svg>

<!-- bottom buttons -->
<div class="btn" style="left:26px;top:862px;width:70px;border-color:#ececec;background:#f6f6f6;color:#6a6a6a;text-align:center">Pause</div>
<div class="btn" style="left:109px;top:862px;width:87px;border-color:#ececec;background:#f8f8f8;color:#6a6a6a;padding-left:20px">Skip Output</div>
<svg class="a" style="left:114px;top:866px" width="13" height="13" viewBox="0 0 13 13"><rect x="0.5" y="0.5" width="12" height="12" rx="1.5" fill="#f4f4f4" stroke="#777"/><path d="M3 3.5L6.3 6.5L3 9.5ZM6.3 3.5L9.5 6.5L6.3 9.5Z" fill="#555"/><rect x="9.5" y="3.5" width="1.2" height="6" fill="#555"/></svg>
<div class="btn" style="left:937px;top:861px;width:72px;border-color:#ececec;background:#f8f8f8;color:#6a6a6a;padding-left:20px">Cancel</div>
<svg class="a" style="left:945px;top:866px" width="13" height="13" viewBox="0 0 13 13"><rect x="0.5" y="0.5" width="12" height="12" rx="1.5" fill="#f4f4f4" stroke="#777"/><rect x="3.5" y="3.5" width="6" height="6" fill="#555"/></svg>
<div class="a th" style="left:30px;top:896px;color:#32c47e">OK: 0</div>
<div class="a th" style="left:77px;top:896px;color:#d25c68">ERR: 0</div>
<div class="a th" style="left:129px;top:896px;color:#eab84e">WARN: 0</div>

<!-- Log (Default) -->
<div class="lf" style="left:1031px;top:107px;width:357px;height:810px"></div>
<div class="lft" style="left:1037px;top:99px">Log (Default)</div>
<div class="a" style="left:1037px;top:119px;width:329px;height:793px;background:#fff;border-top:1px solid #6e6e6e;border-left:1px solid #6e6e6e;overflow:hidden" id="logbox"><div class="log" id="loglines" style="left:2px;top:-7px"><span style="display:block">52</span><span style="display:block">[VOICE] Found 0 files in vdo_long_sound/</span><span style="display:block">[SKIP] No audio files</span><span style="display:block">[PROCESS] Starting: 10005 ms103</span><span style="display:block">[VOICE] Found 0 files in vdo_long_sound/</span><span style="display:block">[SKIP] No audio files</span><span style="display:block">[PROCESS] Starting: 10006 jp7000</span><span style="display:block">[VOICE] Found 0 files in vdo_long_sound/</span><span style="display:block">[SKIP] No audio files</span><span style="display:block">[PROCESS] Starting: 10007 <span class="t" style="width:28px">ไฟตุ้ม</span> 1<span class="t" style="width:25px">แถม</span>1</span><span style="display:block">[VOICE] Found 0 files in vdo_long_sound/</span><span style="display:block">[SKIP] No audio files</span><span style="display:block">[PROCESS] Starting: 10008 migu 5000w <span class="t" style="width:20px">ขาว</span></span><span style="display:block">[VOICE] Found 0 files in vdo_long_sound/</span><span style="display:block">[SKIP] No audio files</span><span style="display:block">[PROCESS] Starting: 10009 <span class="t" style="width:56px">ไฟปักสนาม</span></span><span style="display:block">[VOICE] Found 0 files in vdo_long_sound/</span><span style="display:block">[SKIP] No audio files</span><span style="display:block">[PROCESS] Starting: 10010 <span class="t" style="width:28px">ไฟตุ้ม</span> ST-800</span><span style="display:block">[VOICE] Found 0 files in vdo_long_sound/</span><span style="display:block">[SKIP] No audio files</span><span style="display:block">[PROCESS] Starting: 10011 ufo 100000w</span><span style="display:block">[VOICE] Found 0 files in vdo_long_sound/</span><span style="display:block">[SKIP] No audio files</span><span style="display:block">[PROCESS] Starting: 10012 ufo500000w</span><span style="display:block">[VOICE] Found 0 files in vdo_long_sound/</span><span style="display:block">[SKIP] No audio files</span><span style="display:block">[PROCESS] Starting: 10013 <span class="t" style="width:54px">ไฟแต่งบ้าน</span></span><span style="display:block">[VOICE] Found 0 files in vdo_long_sound/</span><span style="display:block">[SKIP] No audio files</span><span style="display:block">[PROCESS] Starting: 10014</span><span style="display:block;margin-left:-2px"><span class="t" style="width:131px">หลอดไฟทรงกระบอกภิญโญ</span></span><span style="display:block">[VOICE] Found 0 files in vdo_long_sound/</span><span style="display:block">[SKIP] No audio files</span><span style="display:block">[PROCESS] Starting: 10015 E27<span class="t" style="width:42px">กล่องฟ้า</span></span><span style="display:block">[VOICE] Found 0 files in vdo_long_sound/</span><span style="display:block">[SKIP] No audio files</span><span style="display:block">[PROCESS] Starting: 10016 <span class="t" style="width:54px">หูฟังต่ำกว่า</span> 99</span><span style="display:block">[VOICE] Found 0 files in vdo_long_sound/</span><span style="display:block">[SKIP] No audio files</span><span style="display:block">[PROCESS] Starting: 10017 <span class="t" style="width:33px">ลำโพง</span> Sy 307</span><span style="display:block">[VOICE] Found 0 files in vdo_long_sound/</span><span style="display:block">[SKIP] No audio files</span><span style="display:block">[PROCESS] Starting: 10018 TKL E27 <span class="t" style="width:32px">พลพล</span></span><span style="display:block">[VOICE] Found 0 files in vdo_long_sound/</span><span style="display:block">[SKIP] No audio files</span><span style="display:block">[PROCESS] Starting: 10019 <span class="t" style="width:55px">หลอดใบพัด</span></span><span style="display:block">[VOICE] Found 0 files in vdo_long_sound/</span><span style="display:block">[SKIP] No audio files</span></div></div>
<svg class="a" style="left:1109px;top:450px" width="9" height="17" viewBox="0 0 9 17"><path d="M1.5 1.5H7.5M4.5 1.5V15.5M1.5 15.5H7.5" stroke="#111" stroke-width="1.2" fill="none"/></svg>
<div class="a" style="left:1373px;top:841px;width:2px;height:55px;background:#8c8c8c"></div>
</div>

</body></html>
